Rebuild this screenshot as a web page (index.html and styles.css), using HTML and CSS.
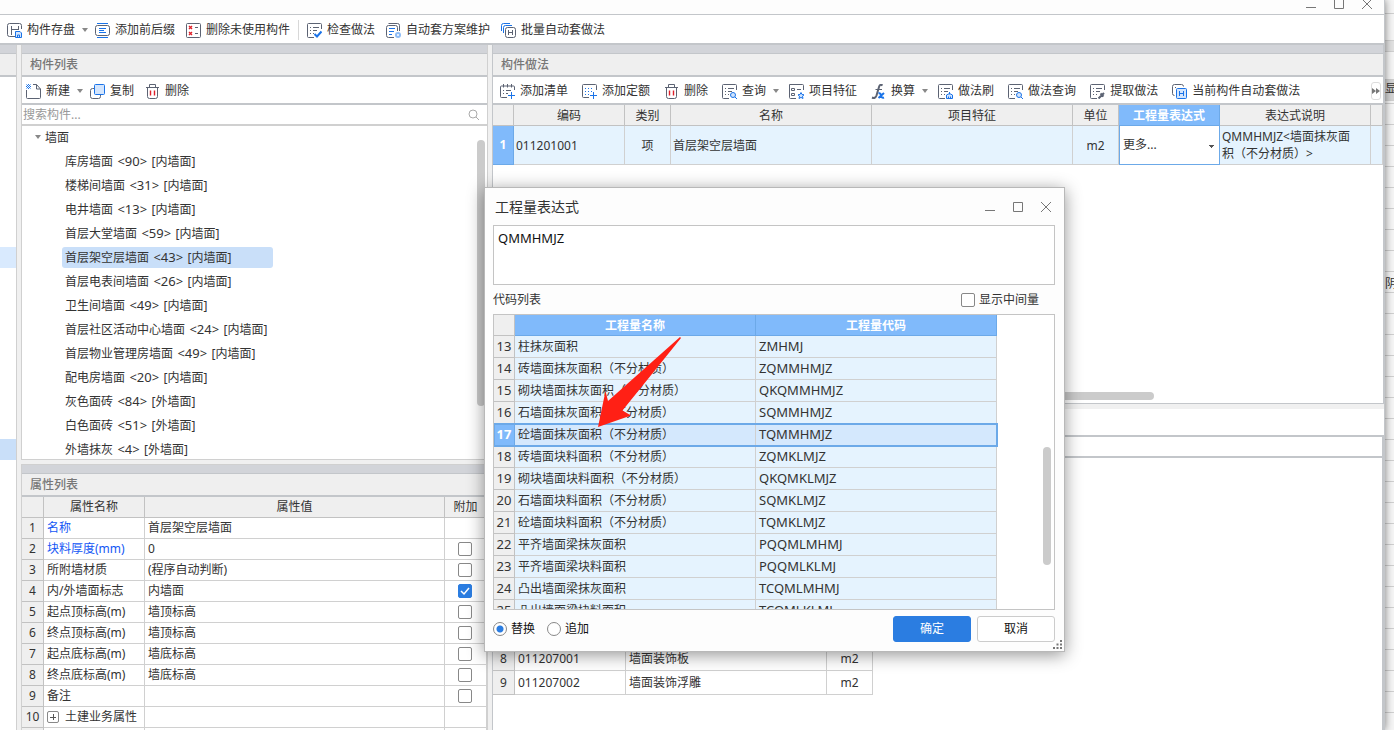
FILE: index.html
```html
<!DOCTYPE html>
<html lang="zh-CN">
<head>
<meta charset="utf-8">
<title>构件做法</title>
<link rel="stylesheet" href="styles.css">
</head>
<body>
<svg class="defs" aria-hidden="true">
  <defs>
    <symbol id="i-save" viewBox="0 0 15 15"><path class="k" d="M8 13.5H2.500Q.5 13.500 .5 11.500V2.500Q.5 .5 2.500 .5H12.500Q14.500 .5 14.500 2.500V6M4.500 3V12M4.500 6.500H11.500M11.500 3V7"/><path class="bl" d="M8.500 8.500H13L14.500 10V14.500H8.500ZM10.500 14.500V12H12.500V14.500"/></symbol>
    <symbol id="i-affix" viewBox="0 0 15 15"><path class="b" d="M2 .5H13M2 14.500H13M4 5.500H11M4 7.500H9M4 9.500H11"/><rect class="k" x=".5" y="2.500" width="14" height="10" rx="2"/></symbol>
    <symbol id="i-unused" viewBox="0 0 15 15"><rect class="k" x=".5" y=".5" width="14" height="14" rx="1"/><path class="k" d="M9 4.500H12M9 10.500H12"/><path class="r" d="M3 3L6 6M6 3L3 6M3 9L6 12M6 9L3 12"/></symbol>
    <symbol id="i-list" viewBox="0 0 15 15"><path class="k" d="M7 14.500H1.500Q.5 14.500 .5 13.500V1.500Q.5 .5 1.500 .5H13.500Q14.500 .5 14.500 1.500V6M3 4.500H4M6 4.500H12M3 7.500H4M6 7.500H10M3 10.500H4M6 10.500H7"/></symbol>
    <symbol id="i-check" viewBox="0 0 15 15"><use href="#i-list"/><path class="b2" d="M7.500 11L10 13.500L14.500 8.500"/></symbol>
    <symbol id="i-scheme" viewBox="0 0 15 15"><path class="k" d="M8 14.500H2.500Q.5 14.500 .5 12.500V4.500Q.5 2.500 2.500 2.500H9.500Q11.500 2.500 11.500 4.500V8M2.500 .5H11.500Q13.500 .5 13.500 2.500V8"/><path class="b" d="M3 5.500H9M3 8.500H8M3 11.500H6"/><circle class="lb" cx="12" cy="12" r="3"/><circle class="w" cx="12" cy="12" r="1"/></symbol>
    <symbol id="i-batch" viewBox="0 0 15 15"><path class="b" d="M.5 8V2.500Q.5 .5 2.500 .5H9M2.500 10V4.500Q2.500 2.500 4.500 2.500H11"/><rect class="k" x="4.500" y="4.500" width="10" height="10" rx="2"/><path class="k" d="M7.500 7V12M11.500 7V12M7.500 9.500H11.500"/></symbol>
    <symbol id="i-new" viewBox="0 0 15 15"><path class="k" d="M.5 6V13.500Q.5 14.500 1.500 14.500H13.500Q14.500 14.500 14.500 13.500V5L10.500 .5H7M10.500 .5V5H14.500"/><path class="b" d="M.5 .5L4.500 4.500M4.500 .5L.5 4.500M2.500 0V1M2.500 4V5M0 2.500H1M4 2.500H5"/></symbol>
    <symbol id="i-copy" viewBox="0 0 15 15"><path class="k" d="M4 4.500H2.500Q.5 4.500 .5 6.500V12.500Q.5 14.500 2.500 14.500H8.500Q10.500 14.500 10.500 12.500V11"/><rect class="bl" x="4.500" y=".5" width="10" height="10" rx="1"/></symbol>
    <symbol id="i-del" viewBox="0 0 15 15"><path class="k" d="M1 3.500H14M4.500 3V.5H10.500V3M2.500 3.500V12.500Q2.500 14.500 4.500 14.500H10.500Q12.500 14.500 12.500 12.500V3.500"/><path class="r" d="M5.500 6.500V11.500M9.500 6.500V11.500"/></symbol>
    <symbol id="i-addlist" viewBox="0 0 15 15"><path class="k" d="M7 13.500H1.500Q.5 13.500 .5 12.500V3Q.5 2 1.500 2H13.500Q14.500 2 14.500 3V6M3.500 0V3.500M7.500 0V3.500M11.500 0V3.500M3 6.500H4M6 6.500H11M3 9.500H4M6 9.500H8"/><path class="b" d="M11.500 8V15M8 11.500H15"/></symbol>
    <symbol id="i-addquota" viewBox="0 0 15 15"><path class="k" d="M7 13.500H1.500Q.5 13.500 .5 12.500V1.500Q.5 .5 1.500 .5H13.500Q14.500 .5 14.500 1.500V6"/><path class="b" d="M3 4.500H4M6 4.500H7M9 4.500H10M3 7.500H4M6 7.500H7M9 7.500H10M3 10.500H4M6 10.500H7M11.500 8V15M8 11.500H15"/></symbol>
    <symbol id="i-query" viewBox="0 0 15 15"><use href="#i-list"/><circle class="bl" cx="11" cy="11" r="2.500"/><path class="b" d="M13 13L15 15"/></symbol>
    <symbol id="i-feature" viewBox="0 0 15 15"><path class="k" d="M7 14.500H1.500Q.5 14.500 .5 13.500V.5H13.500Q14.500 .5 14.500 1.500V6M2.500 4.500H5.500V6.500H2.500ZM2.500 9.500H5.500V11.500H2.500ZM8 5.500H12"/><path class="bl" d="M12 8.500L13 10.500L15 10.800L13.500 12.200L14 14.500L12 13.400L10 14.500L10.500 12.200L9 10.800L11 10.500Z"/></symbol>
    <symbol id="i-fx" viewBox="0 0 15 15"><path class="k2" d="M11.500 1.500Q9 -.5 8 3L5.500 11.500Q4.300 15 1 13.500"/><path class="k" d="M4.500 5.500H11"/><path class="b2" d="M7.500 9.500Q9.500 8.500 10 11.500Q10.500 14.500 13 13.500M13 9L7.500 14"/></symbol>
    <symbol id="i-brush" viewBox="0 0 15 15"><use href="#i-list"/><path class="bl" d="M11.500 8V10.500M8.500 14V11L11.500 9.500L14.500 11V14.500H8.500ZM10.500 12.500V14.500M12.500 12.500V14.500"/></symbol>
    <symbol id="i-extract" viewBox="0 0 15 15"><use href="#i-list"/><path class="k2" d="M8.500 14.500L12 11M10.500 9.500L13.500 12.500M12.500 10.500L14 9"/></symbol>
    <symbol id="i-current" viewBox="0 0 15 15"><path class="k" d="M2.500 11.500Q.5 11.500 .5 9.500V2.500Q.5 .5 2.500 .5H9.500Q11.500 .5 11.500 2.500M3 3.500H4"/><rect class="bl" x="4.500" y="4.500" width="10" height="10" rx="1"/><path class="b" d="M7.500 7V12M11.500 7V12M7.500 9.500H11.500"/></symbol>
  </defs>
</svg>

<div class="screen">
  <main class="window">
    <header class="titlebar">
      <button class="win-btn" aria-label="最小化"><svg viewBox="0 0 12 12"><path d="M1 9.500H11"/></svg></button>
      <button class="win-btn" aria-label="最大化"><svg viewBox="0 0 12 12"><path d="M1.500 1.500H10.500V10.500H1.500Z"/></svg></button>
      <button class="win-btn" aria-label="关闭"><svg viewBox="0 0 12 12"><path d="M1 1L11 11M11 1L1 11"/></svg></button>
    </header>

    <nav class="toolbar main-tools">
      <button class="tool"><svg><use href="#i-save"/></svg>构件存盘<i class="caret"></i></button>
      <button class="tool"><svg><use href="#i-affix"/></svg>添加前后缀</button>
      <button class="tool"><svg><use href="#i-unused"/></svg>删除未使用构件</button>
      <span class="sep"></span>
      <button class="tool"><svg><use href="#i-check"/></svg>检查做法</button>
      <button class="tool"><svg><use href="#i-scheme"/></svg>自动套方案维护</button>
      <button class="tool"><svg><use href="#i-batch"/></svg>批量自动套做法</button>
    </nav>

    <div class="workspace">
      <aside class="rail">
        <div class="dock-bar"></div>
        <div class="rail-head"></div>
        <div class="rail-mark hover"></div>
        <div class="rail-mark active"></div>
      </aside>

      <div class="left">
        <section class="components">
          <div class="dock-bar"></div>
          <h2 class="panel-title">构件列表</h2>
          <div class="toolbar panel-tools">
            <button class="tool"><svg><use href="#i-new"/></svg>新建<i class="caret"></i></button>
            <button class="tool"><svg><use href="#i-copy"/></svg>复制</button>
            <button class="tool"><svg><use href="#i-del"/></svg>删除</button>
          </div>
          <label class="search">
            <input type="text" placeholder="搜索构件..." aria-label="搜索构件">
            <svg viewBox="0 0 12 12"><circle cx="5" cy="5" r="4"/><path d="M8 8L11 11"/></svg>
          </label>
          <div class="tree">
            <div class="tree-root"><i class="caret"></i>墙面</div>
            <ul>
              <li><span>库房墙面<b> &lt;90&gt; </b>[内墙面]</span></li>
              <li><span>楼梯间墙面<b> &lt;31&gt; </b>[内墙面]</span></li>
              <li><span>电井墙面<b> &lt;13&gt; </b>[内墙面]</span></li>
              <li><span>首层大堂墙面<b> &lt;59&gt; </b>[内墙面]</span></li>
              <li><span class="selected">首层架空层墙面<b> &lt;43&gt; </b>[内墙面]</span></li>
              <li><span>首层电表间墙面<b> &lt;26&gt; </b>[内墙面]</span></li>
              <li><span>卫生间墙面<b> &lt;49&gt; </b>[内墙面]</span></li>
              <li><span>首层社区活动中心墙面<b> &lt;24&gt; </b>[内墙面]</span></li>
              <li><span>首层物业管理房墙面<b> &lt;49&gt; </b>[内墙面]</span></li>
              <li><span>配电房墙面<b> &lt;20&gt; </b>[内墙面]</span></li>
              <li><span>灰色面砖<b> &lt;84&gt; </b>[外墙面]</span></li>
              <li><span>白色面砖<b> &lt;51&gt; </b>[外墙面]</span></li>
              <li><span>外墙抹灰<b> &lt;4&gt; </b>[外墙面]</span></li>
            </ul>
            <div class="thumb"></div>
          </div>
        </section>

        <section class="properties">
          <div class="dock-bar"></div>
          <h2 class="panel-title">属性列表</h2>
          <table class="grid props">
            <colgroup><col class="c-num"><col class="c-prop"><col><col class="c-extra"></colgroup>
            <thead><tr><th></th><th>属性名称</th><th>属性值</th><th>附加</th></tr></thead>
            <tbody>
              <tr><th>1</th><td class="key">名称</td><td>首层架空层墙面</td><td></td></tr>
              <tr><th>2</th><td class="key">块料厚度(mm)</td><td>0</td><td><input type="checkbox" aria-label="附加 块料厚度"></td></tr>
              <tr><th>3</th><td>所附墙材质</td><td>(程序自动判断)</td><td><input type="checkbox" aria-label="附加 所附墙材质"></td></tr>
              <tr><th>4</th><td>内/外墙面标志</td><td>内墙面</td><td><input type="checkbox" checked aria-label="附加 内/外墙面标志"></td></tr>
              <tr><th>5</th><td>起点顶标高(m)</td><td>墙顶标高</td><td><input type="checkbox" aria-label="附加 起点顶标高"></td></tr>
              <tr><th>6</th><td>终点顶标高(m)</td><td>墙顶标高</td><td><input type="checkbox" aria-label="附加 终点顶标高"></td></tr>
              <tr><th>7</th><td>起点底标高(m)</td><td>墙底标高</td><td><input type="checkbox" aria-label="附加 起点底标高"></td></tr>
              <tr><th>8</th><td>终点底标高(m)</td><td>墙底标高</td><td><input type="checkbox" aria-label="附加 终点底标高"></td></tr>
              <tr><th>9</th><td>备注</td><td></td><td><input type="checkbox" aria-label="附加 备注"></td></tr>
              <tr><th>10</th><td><div class="group"><button class="expand" aria-label="展开"></button>土建业务属性</div></td><td></td><td></td></tr>
              <tr><th></th><td></td><td></td><td></td></tr>
            </tbody>
          </table>
        </section>
      </div>

      <div class="right">
        <section class="methods">
          <div class="dock-bar"></div>
          <h2 class="panel-title">构件做法</h2>
          <div class="toolbar panel-tools wide">
            <button class="tool"><svg><use href="#i-addlist"/></svg>添加清单</button>
            <button class="tool"><svg><use href="#i-addquota"/></svg>添加定额</button>
            <button class="tool"><svg><use href="#i-del"/></svg>删除</button>
            <button class="tool"><svg><use href="#i-query"/></svg>查询<i class="caret"></i></button>
            <button class="tool"><svg><use href="#i-feature"/></svg>项目特征</button>
            <button class="tool"><svg><use href="#i-fx"/></svg>换算<i class="caret"></i></button>
            <button class="tool"><svg><use href="#i-brush"/></svg>做法刷</button>
            <button class="tool"><svg><use href="#i-query"/></svg>做法查询</button>
            <button class="tool"><svg><use href="#i-extract"/></svg>提取做法</button>
            <button class="tool"><svg><use href="#i-current"/></svg>当前构件自动套做法</button>
            <button class="more" aria-label="更多工具"><svg viewBox="0 0 8 6"><path d="M0 0L4 3L0 6ZM4 0L8 3L4 6Z"/></svg></button>
          </div>
          <table class="grid method-grid">
            <colgroup><col class="m-num"><col class="m-code"><col class="m-kind"><col class="m-name"><col class="m-feature"><col class="m-unit"><col class="m-expr"><col class="m-desc"><col></colgroup>
            <thead><tr><th></th><th>编码</th><th>类别</th><th>名称</th><th>项目特征</th><th>单位</th><th class="current">工程量表达式</th><th>表达式说明</th><th></th></tr></thead>
            <tbody><tr><th class="current">1</th><td>011201001</td><td class="mid">项</td><td>首层架空层墙面</td><td></td><td class="mid">m2</td><td class="editing"><select aria-label="工程量表达式"><option>更多...</option></select></td><td class="desc">QMMHMJZ&lt;墙面抹灰面积（不分材质）&gt;</td><td></td></tr></tbody>
          </table>
          <div class="h-thumb"></div>
        </section>

        <section class="lookup">
          <div class="lookup-tabs"></div>
          <div class="lookup-body">
            <div class="lookup-head"></div>
            <table class="grid lookup-grid">
              <colgroup><col class="l-num"><col class="l-code"><col class="l-name"><col class="l-unit"></colgroup>
              <tbody>
                <tr><th>8</th><td>011207001</td><td>墙面装饰板</td><td class="mid">m2</td></tr>
                <tr><th>9</th><td>011207002</td><td>墙面装饰浮雕</td><td class="mid">m2</td></tr>
              </tbody>
            </table>
          </div>
        </section>
      </div>
    </div>
  </main>

  <aside class="behind">
    <div class="b-title"></div><div class="b-tools"></div><div class="b-bar"></div><div class="b-head"></div><div class="b-tab">显示</div>
    <div class="b-rows"><div>阴</div></div>
  </aside>
</div>

<div class="dialog" role="dialog" aria-labelledby="dlg-title">
  <header class="dialog-head">
    <h1 id="dlg-title">工程量表达式</h1>
    <button class="win-btn" aria-label="最小化"><svg viewBox="0 0 12 12"><path d="M1 9.500H11"/></svg></button>
    <button class="win-btn" aria-label="最大化"><svg viewBox="0 0 12 12"><path d="M1.500 1.500H10.500V10.500H1.500Z"/></svg></button>
    <button class="win-btn" aria-label="关闭"><svg viewBox="0 0 12 12"><path d="M1 1L11 11M11 1L1 11"/></svg></button>
  </header>
  <textarea class="expr" aria-label="表达式">QMMHMJZ</textarea>
  <div class="list-head"><span>代码列表</span><label><input type="checkbox">显示中间量</label></div>
  <div class="code-box">
    <table class="grid codes">
      <colgroup><col class="d-num"><col class="d-name"><col class="d-code"></colgroup>
      <thead><tr><th></th><th class="current">工程量名称</th><th class="current">工程量代码</th></tr></thead>
      <tbody>
        <tr><th>13</th><td>柱抹灰面积</td><td>ZMHMJ</td></tr>
        <tr><th>14</th><td>砖墙面抹灰面积（不分材质）</td><td>ZQMMHMJZ</td></tr>
        <tr><th>15</th><td>砌块墙面抹灰面积（不分材质）</td><td>QKQMMHMJZ</td></tr>
        <tr><th>16</th><td>石墙面抹灰面积（不分材质）</td><td>SQMMHMJZ</td></tr>
        <tr class="picked"><th class="current">17</th><td>砼墙面抹灰面积（不分材质）</td><td>TQMMHMJZ</td></tr>
        <tr><th>18</th><td>砖墙面块料面积（不分材质）</td><td>ZQMKLMJZ</td></tr>
        <tr><th>19</th><td>砌块墙面块料面积（不分材质）</td><td>QKQMKLMJZ</td></tr>
        <tr><th>20</th><td>石墙面块料面积（不分材质）</td><td>SQMKLMJZ</td></tr>
        <tr><th>21</th><td>砼墙面块料面积（不分材质）</td><td>TQMKLMJZ</td></tr>
        <tr><th>22</th><td>平齐墙面梁抹灰面积</td><td>PQQMLMHMJ</td></tr>
        <tr><th>23</th><td>平齐墙面梁块料面积</td><td>PQQMLKLMJ</td></tr>
        <tr><th>24</th><td>凸出墙面梁抹灰面积</td><td>TCQMLMHMJ</td></tr>
        <tr><th>25</th><td>凸出墙面梁块料面积</td><td>TCQMLKLMJ</td></tr>
      </tbody>
    </table>
    <div class="thumb"></div>
  </div>
  <footer class="dialog-foot">
    <label><input type="radio" name="mode" checked>替换</label>
    <label><input type="radio" name="mode">追加</label>
    <button class="btn primary">确定</button>
    <button class="btn">取消</button>
  </footer>
  <svg class="grip" viewBox="0 0 9 9"><path d="M7 0h2v2H7zM3.500 3.500h2v2h-2zM7 3.500h2v2H7zM0 7h2v2H0zM3.500 7h2v2h-2zM7 7h2v2H7z"/></svg>
  <svg class="pointer" viewBox="0 0 84 91"><path d="M82 0L83 1L24.500 73.500L33 78.500L0 90L7.500 54L10 64Z"/></svg>
</div>
</body>
</html>
```

FILE: styles.css
```css
:root {
  --line: #c3c6ca;
  --cell: #d0d0d0;
  --head: #efefef;
  --bar: #d2d4d9;
  --sky: #e5f3fe;
  --accent: #80bafb;
  --accent-line: #6ca9e8;
  --blue: #2b7de1;
}

* { box-sizing: border-box; }

body {
  margin: 0;
  overflow: hidden;
  font: 12px/18px "Noto Sans", "Noto Sans CJK SC", sans-serif;
  color: #333;
  background: #fff;
}

h1, h2, ul { margin: 0; padding: 0; font-weight: 400; list-style: none; }
button, input, select, textarea { font: inherit; color: inherit; margin: 0; }
button { padding: 0; border: 0; background: none; }

.defs { position: absolute; width: 0; height: 0; }
.k, .k2, .b, .b2, .r { fill: none; stroke: #5c6373; stroke-width: 1; }
.k2 { stroke-width: 2; }
.b, .b2 { stroke: #1a73e8; }
.b2 { stroke-width: 2; }
.r { stroke: #e0202a; stroke-width: 1.4; }
.bl { fill: #d3e5fd; stroke: #1a73e8; }
.lb { fill: #8fbdf6; }
.w { fill: #fff; }

.screen { display: flex; height: 100vh; overflow: hidden; }
.window { flex: 1; min-width: 0; display: flex; flex-direction: column; border-right: 1px solid var(--line); box-shadow: 0 0 8px rgba(0, 0, 0, .5); position: relative; z-index: 1; background: #fff; }

.titlebar { display: flex; justify-content: flex-end; align-items: flex-start; gap: 16px; height: 15px; padding-right: 11px; border-bottom: 1px solid var(--line); background: #fdfdfd; overflow: hidden; }
.win-btn { width: 12px; height: 12px; display: flex; }
.titlebar .win-btn { margin-top: -2px; }
.win-btn svg { width: 12px; height: 12px; fill: none; stroke: #777; }

.toolbar { display: flex; align-items: center; white-space: nowrap; }
.tool { display: flex; align-items: center; gap: 5px; flex: none; }
.tool svg { width: 15px; height: 15px; }
.caret { width: 0; height: 0; border: 3px solid transparent; border-top: 4px solid #888; border-bottom: 0; }
.tool .caret { margin: 0 -4px 0 2px; }
.main-tools { height: 28px; padding: 2px 7px 0; gap: 11px; flex: none; }
.sep { width: 1px; height: 20px; background: #d8d8d8; margin: 0 -3px; }

.workspace { flex: 1; min-height: 0; display: flex; gap: 4px; background: #f0f0f0; border-top: 2px solid var(--line); }
.dock-bar { height: 9px; background: var(--bar); border-bottom: 1px solid var(--line); flex: none; }
.rail { width: 17px; flex: none; background: #fff; border-right: 1px solid var(--cell); }
.rail-head { height: 23px; background: var(--head); border-bottom: 2px solid var(--line); }
.rail-mark { height: 21px; background: #d9eafe; }
.rail-mark.hover { margin-top: 170px; }
.rail-mark.active { margin-top: 171px; background: #c9dff9; }

.left { flex: 0 0 467px; min-width: 0; display: flex; flex-direction: column; gap: 4px; }
.components { flex: none; background: #fff; border: 1px solid var(--cell); border-top: 0; }
.panel-title { height: 23px; padding-left: 8px; font-size: 12px; line-height: 22px; font-weight: 500; color: #777; background: var(--head); border-bottom: 2px solid var(--line); flex: none; }
.panel-tools { height: 28px; padding: 2px 4px 0; gap: 11px; border-bottom: 2px solid var(--line); flex: none; }
.panel-tools.wide { padding: 2px 2px 0 7px; gap: 14px; }
.more { margin-left: auto; width: 10px; height: 18px; border: 1px solid #ddd; border-radius: 3px; display: grid; place-items: center; }
.more svg { width: 8px; height: 6px; fill: #777; }

.search { display: flex; align-items: center; height: 21px; padding-right: 7px; border-bottom: 2px solid var(--cell); }
.search input { flex: 1; border: 0; outline: 0; padding: 0 1px; background: none; }
.search input::placeholder { color: #999; }
.search svg { width: 12px; height: 12px; fill: none; stroke: #aaa; }

.tree { position: relative; height: 333px; overflow: hidden; line-height: 21px; }
.tree-root { display: flex; align-items: center; gap: 4px; height: 24px; padding: 0 0 2px 13px; }
.tree li { height: 24px; padding: 1px 0 0 40px; white-space: nowrap; }
.tree li span { display: inline-block; height: 21px; padding: 0 3px; }
.tree li b { margin: 0 1px; font-size: 13px; font-weight: 400; }
.tree li .selected { width: 211px; background: #c9dff9; border-radius: 3px; }
.thumb { position: absolute; width: 8px; border-radius: 4px; background: #cbcbcb; }
.tree .thumb { top: 14px; right: 2px; height: 266px; }

.properties { flex: 1; min-height: 0; overflow: hidden; border: 1px solid var(--cell); border-bottom: 0; background: #fff; }

.grid { border-collapse: separate; border-spacing: 0; table-layout: fixed; width: 100%; }
.grid th, .grid td { padding: 0 3px; border-right: 1px solid var(--cell); border-bottom: 1px solid var(--cell); font-weight: 400; text-align: left; overflow: hidden; white-space: nowrap; }
.grid th { background: var(--head); text-align: center; padding: 0; border-color: #c2c2c2; }
.grid .mid { text-align: center; }
.grid th.current { background: var(--accent); border-color: var(--accent-line); color: #fff; font-weight: 700; }

.props th, .props td { height: 21px; line-height: 20px; }
.props td:last-child { text-align: center; padding: 0 2px 0 0; }
.props input { display: block; margin: 0 auto; }
.c-num { width: 22px; }
.c-prop { width: 101px; }
.c-extra { width: 42px; }
.key { color: #1457f5; }
.group { display: flex; align-items: center; gap: 6px; }
.expand { width: 12px; height: 12px; border: 1px solid #888; border-radius: 2px; background: linear-gradient(#555, #555) center / 6px 1px no-repeat, linear-gradient(#555, #555) center / 1px 6px no-repeat; }

input[type="checkbox"], input[type="radio"] { appearance: none; width: 14px; height: 14px; border: 1px solid #888; border-radius: 2px; background: #fff; }
input[type="checkbox"]:checked { border-color: var(--blue); background: var(--blue) url("data:image/svg+xml,%3Csvg xmlns='http://www.w3.org/2000/svg' viewBox='0 0 12 12'%3E%3Cpath d='M2 6l3 3 5-6' fill='none' stroke='white' stroke-width='1.500'/%3E%3C/svg%3E"); }
input[type="radio"] { border-radius: 50%; }
input[type="radio"]:checked { background: radial-gradient(circle, var(--blue) 3px, #fff 4px); }

.right { flex: 1; min-width: 0; display: flex; flex-direction: column; gap: 5px; }
.methods { position: relative; flex: 0 0 359px; background: #fff; border: 1px solid var(--line); border-top: 0; overflow: hidden; }
.method-grid th { height: 21px; line-height: 20px; }
.method-grid thead th, .codes thead th { padding-top: 1px; line-height: 19px; }
.method-grid td { height: 39px; padding: 1px 2px 0; background: var(--sky); }
.method-grid .editing { padding: 0; background: #fff; border-color: var(--accent-line); box-shadow: inset 1px 0 var(--accent-line); }
.method-grid .desc { white-space: normal; padding: 0 10px 0 2px; line-height: 17px; }
.method-grid select { width: 100%; height: 36px; padding: 0 4px; border: 0; appearance: none; background: linear-gradient(#555, #555) right 5px center / 5px 1px no-repeat, linear-gradient(#555, #555) right 6px top 19px / 3px 1px no-repeat, linear-gradient(#555, #555) right 7px top 20px / 1px 1px no-repeat; }
.m-num { width: 21px; }
.m-code { width: 111px; }
.m-kind { width: 46px; }
.m-name, .m-feature { width: 201px; }
.m-unit { width: 46px; }
.m-expr { width: 101px; }
.m-desc { width: 151px; }
.h-thumb { position: absolute; left: 4px; bottom: 3px; width: 657px; height: 8px; border-radius: 4px; background: #cbcbcb; }

.lookup { flex: 1; min-height: 0; display: flex; flex-direction: column; background: #fff; }
.lookup-tabs { height: 26px; flex: none; }
.lookup-body { flex: 1; min-height: 0; border: 2px solid var(--line); border-width: 2px 2px 0 1px; overflow: hidden; }
.lookup-head { height: 21px; border-bottom: 2px solid var(--line); }
.lookup-grid { width: 380px; margin-top: 189px; }
.lookup-grid th, .lookup-grid td { height: 24px; }
.l-num { width: 22px; }
.l-code { width: 111px; }
.l-name { width: 201px; }
.l-unit { width: 46px; }

.behind { width: 9px; flex: none; overflow: hidden; background: #f6f6f6; white-space: nowrap; }
.behind > div { border-bottom: 1px solid var(--cell); overflow: hidden; }
.b-title { height: 14px; }
.b-tools { height: 27px; }
.b-bar { height: 11px; background: #e2e2e2; }
.b-head { height: 28px; }
.b-tab { height: 21px; background: #d4d4d4; }
.behind .b-rows { height: 640px; padding-top: 173px; border: 0; line-height: 20px; background: repeating-linear-gradient(transparent 0 2px, var(--cell) 2px 3px, transparent 3px 21px); }

.dialog { position: absolute; left: 484px; top: 187px; z-index: 2; width: 581px; padding: 0 9px 0 8px; border: 1px solid #b8b8b8; background: #fdfdfd; box-shadow: 0 3px 16px rgba(0, 0, 0, .42); }
.dialog-head { display: flex; align-items: center; gap: 16px; height: 37px; padding-right: 3px; }
.dialog-head h1 { flex: 1; padding-left: 2px; font-size: 14px; line-height: 20px; }
.expr { display: block; width: 100%; height: 60px; padding: 3px 4px; border: 1px solid #c4c4c4; outline: 0; resize: none; color: #111; background: #fff; font-size: 13px; }
.list-head { display: flex; justify-content: space-between; align-items: center; height: 29px; padding-right: 16px; }
.list-head label, .dialog-foot label { display: flex; align-items: center; gap: 4px; }
.code-box { position: relative; height: 296px; overflow: hidden; border: 1px solid #c4c4c4; background: #fff; }
.codes { width: 503px; }
.codes thead th { height: 21px; }
.codes tbody th, .codes tbody td { height: 22px; line-height: 21px; }
.codes tbody td { background: var(--sky); }
.codes td:last-child, .codes tbody th { font-size: 13px; }
.codes .picked { outline: 2px solid var(--accent-line); outline-offset: -1px; }
.codes .picked td { background: #d4e8fd; }
.d-num { width: 21px; }
.d-name, .d-code { width: 241px; }
.code-box .thumb { top: 132px; right: 3px; height: 118px; }
.dialog-foot { display: flex; align-items: center; gap: 6px; height: 41px; padding-bottom: 3px; color: #111; }
.dialog-foot label { margin-right: 6px; }
.btn { width: 78px; height: 26px; border: 1px solid #ccc; border-radius: 3px; background: #fff; }
.primary { margin-left: auto; border-color: var(--blue); background: var(--blue); color: #fff; }
.grip { position: absolute; right: 2px; bottom: 2px; width: 9px; height: 9px; fill: #777; }
.pointer { position: absolute; left: 113px; top: 149px; width: 84px; height: 91px; fill: #ff2015; }
```
